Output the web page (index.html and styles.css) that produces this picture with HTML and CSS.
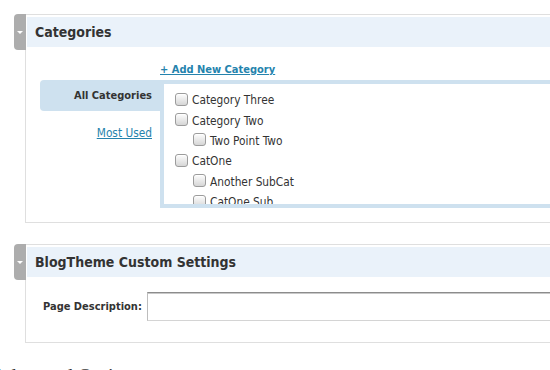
FILE: index.html
```html
<!DOCTYPE html>
<html lang="en">
<head>
	<meta charset="UTF-8">
	<title>Edit Page</title>
	<link rel="stylesheet" href="styles.css">
</head>
<body>
	<div class="wrap">
		<div class="postbox">
			<div class="handle"><span class="arrow"></span></div>
			<h3 class="hndle">Categories</h3>
			<div class="inside cat-inside">
				<a href="#" class="add-new">+ Add New Category</a>
				<div class="cat-row">
					<ul class="cat-tabs">
						<li class="tab-active">All Categories</li>
						<li class="tab-link"><a href="#">Most Used</a></li>
					</ul>
					<div class="cat-panel">
						<ul class="cat-list">
							<li><input type="checkbox" class="cb"><label>Category Three</label></li>
							<li><input type="checkbox" class="cb"><label>Category Two</label></li>
							<li class="child"><input type="checkbox" class="cb"><label>Two Point Two</label></li>
							<li><input type="checkbox" class="cb"><label>CatOne</label></li>
							<li class="child"><input type="checkbox" class="cb"><label>Another SubCat</label></li>
							<li class="child"><input type="checkbox" class="cb"><label>CatOne Sub</label></li>
							<li><input type="checkbox" class="cb"><label>Uncategorized</label></li>
						</ul>
					</div>
				</div>
			</div>
		</div>

		<div class="postbox">
			<div class="handle"><span class="arrow"></span></div>
			<h3 class="hndle">BlogTheme Custom Settings</h3>
			<div class="inside meta-inside">
				<div class="meta-row">
					<label class="meta-label">Page Description:</label>
					<input type="text" class="meta-input">
				</div>
			</div>
		</div>

		<h2 class="section-title">Advanced Options</h2>
	</div>
</body>
</html>
```

FILE: styles.css
```css
html, body {
	margin: 0;
	padding: 0;
	overflow: hidden;
	background: #fff;
}
ul, li, h2, h3 {
	margin: 0;
	padding: 0;
	list-style: none;
}
a {
	color: #2583ad;
	text-decoration: underline;
}
.wrap {
	padding: 14px 0 0 25px;
	width: 600px;
	font-family: "DejaVu Sans", sans-serif;
	font-stretch: condensed;
	color: #333;
}
.postbox {
	position: relative;
	border: 1px solid #dfdfdf;
	border-right: none;
	padding: 2px 0 0 1px;
	margin-bottom: 21px;
}
.handle {
	position: absolute;
	left: -12px;
	top: -1px;
	width: 12px;
	height: 36px;
	background: #adadad;
	border-radius: 4px 0 0 4px;
}
.arrow {
	position: absolute;
	left: 3px;
	top: 17px;
	width: 0;
	height: 0;
	border-left: 3px solid transparent;
	border-right: 3px solid transparent;
	border-top: 3px solid #fff;
}
.hndle {
	height: 30px;
	line-height: 30px;
	padding-left: 8px;
	background: #eaf2fa;
	font-size: 14px;
	font-weight: bold;
	color: #333;
}
.cat-inside {
	padding: 15px 0 14px 13px;
}
.add-new {
	display: block;
	margin: 0 0 3px 120px;
	line-height: 15px;
	font-size: 11px;
	font-weight: bold;
}
.cat-row {
	display: flex;
}
.cat-tabs {
	width: 120px;
	flex: none;
}
.cat-tabs li {
	text-align: right;
	padding-right: 8px;
}
.tab-active {
	height: 31px;
	line-height: 31px;
	background: #cee1ef;
	border-radius: 4px 0 0 4px;
	font-size: 11px;
	font-weight: bold;
}
.tab-link {
	padding-top: 14px;
	line-height: 16px;
	font-size: 11.8px;
}
.cat-panel {
	flex: 1;
	height: 120px;
	border: 4px solid #cee1ef;
	border-right: none;
	overflow: hidden;
	background: #fff;
}
.cat-list {
	padding: 6px 0 0 11px;
}
.cat-list li {
	display: flex;
	align-items: center;
	height: 20.4px;
	font-size: 11.8px;
}
.cat-list li.child {
	padding-left: 18px;
}
.cb {
	-webkit-appearance: none;
	appearance: none;
	width: 13px;
	height: 13px;
	margin: 0 4px 2px 0;
	border: 1px solid #9c9c9c;
	border-radius: 3px;
	background: linear-gradient(#fdfdfd, #d6d6d6);
	box-shadow: inset 0 1px 0 #fff;
}
.meta-inside {
	padding: 15px 0 21px 16px;
}
.meta-row {
	display: flex;
	align-items: center;
	gap: 6px;
}
.meta-label {
	flex: none;
	width: 98px;
	white-space: nowrap;
	font-size: 11px;
	font-weight: bold;
}
.meta-input {
	flex: 1;
	height: 29px;
	box-sizing: border-box;
	border: 1px solid #d4d4d4;
	border-top: 1px solid #8c8c8c;
	border-left-color: #bdbdbd;
	box-shadow: inset 0 1px 0 #c8c8c8;
	margin: 0;
	padding: 0 4px;
	outline: none;
}
.section-title {
	margin: 16px 0 0 -33px;
	font-family: "Liberation Serif", serif;
	font-stretch: normal;
	font-size: 20px;
	line-height: 24px;
	font-weight: normal;
	color: #333;
}
```
